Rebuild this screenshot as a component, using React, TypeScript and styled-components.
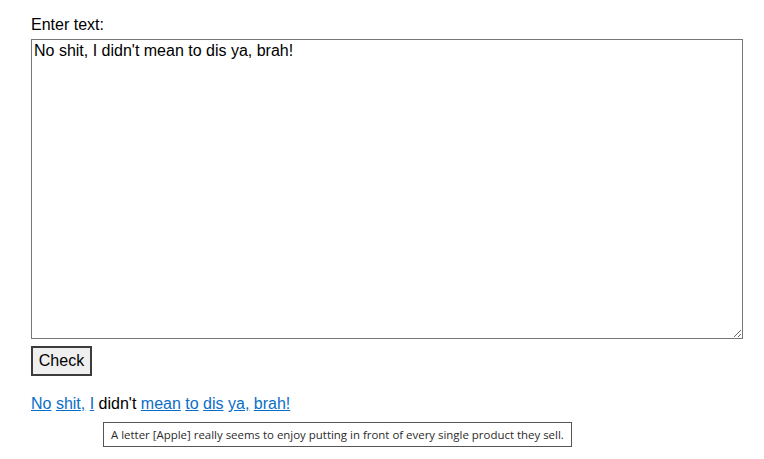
import React from "react";
import styled, { createGlobalStyle } from "styled-components";

const Global = createGlobalStyle`
  html, body { margin: 0; padding: 0; background: #fff; }
  body { font-family: "Liberation Sans", Arial, sans-serif; font-size: 16px; color: #000; }
`;

const Page = styled.div`
  box-sizing: border-box;
  min-height: 459px;
  padding: 16px 21px 0 31px;
  width: 764px;
`;

const Label = styled.label`
  display: block;
  line-height: 18px;
  margin-bottom: 5px;
`;

const TextArea = styled.textarea`
  display: block;
  box-sizing: border-box;
  width: 712px;
  height: 300px;
  margin: 0;
  padding: 2px;
  border: 1px solid #767676;
  font-family: "Liberation Sans", Arial, sans-serif;
  font-size: 16px;
  line-height: 18px;
  color: #000;
  resize: both;
  outline: none;
`;

const CheckButton = styled.button`
  display: block;
  box-sizing: border-box;
  margin-top: 7px;
  height: 30px;
  width: 61px;
  padding: 0;
  border: 2px solid #3c3c3c;
  background: #efefef;
  font-family: "Liberation Sans", Arial, sans-serif;
  font-size: 16px;
  color: #000;
`;

const Result = styled.div`
  position: relative;
  margin-top: 19px;
  line-height: 18px;
  z-index: 1;
`;

const Word = styled.a`
  color: #0b6ec6;
  text-decoration: underline;
  text-decoration-skip-ink: auto;
`;

const Tooltip = styled.span`
  position: absolute;
  left: 72px;
  top: 27px;
  z-index: 2;
  display: block;
  box-sizing: border-box;
  height: 25px;
  width: 469px;
  padding: 0 7px;
  border: 1px solid #555;
  background: #fff;
  font-family: "Open Sans", "Noto Sans", sans-serif;
  font-size: 11.45px;
  line-height: 23px;
  color: #2b2b2b;
  white-space: nowrap;
`;

export default function App() {
  const text = "No shit, I didn't mean to dis ya, brah!";
  return (
    <>
      <Global />
      <Page>
        <Label htmlFor="t">Enter text:</Label>
        <TextArea id="t" defaultValue={text} />
        <CheckButton>Check</CheckButton>
        <Result>
          <Word href="#">No</Word> <Word href="#">shit,</Word> <Word href="#">I</Word> didn't{" "}
          <Word href="#">mean</Word> <Word href="#">to</Word> <Word href="#">dis</Word>{" "}
          <Word href="#">ya,</Word> <Word href="#">brah!</Word>
          <Tooltip role="tooltip">A letter [Apple] really seems to enjoy putting in front of every single product they sell.</Tooltip>
        </Result>
      </Page>
    </>
  );
}
